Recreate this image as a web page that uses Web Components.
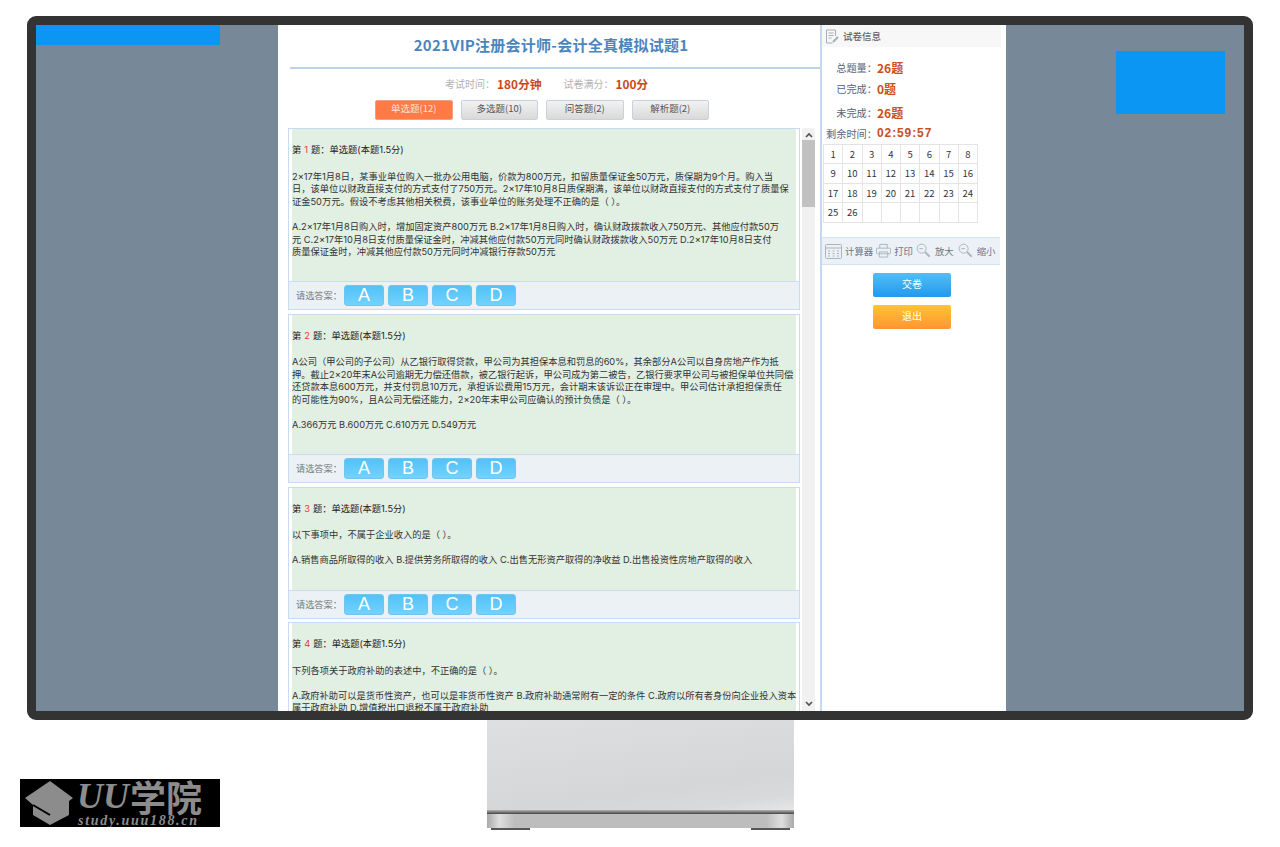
<!DOCTYPE html>
<html lang="zh-CN">
<head>
<meta charset="utf-8">
<title>2021VIP注册会计师-会计全真模拟试题1</title>
<style>
  html, body { margin: 0; height: 847px; background: #fff; overflow: hidden; }
  body { font-family: "Noto Sans CJK SC", "Liberation Sans", sans-serif; }
</style>
</head>
<body>
<desk-monitor>
  <exam-paper slot="paper">
    <exam-question num="1" style="--card-h:182px">
      <p>2×17年1月8日&#65292;某事业单位购入一批办公用电脑&#65292;价款为800万元&#65292;扣留质量保证金50万元&#65292;质保期为9个月。购入当<br>日&#65292;该单位以财政直接支付的方式支付了750万元。2×17年10月8日质保期满&#65292;该单位以财政直接支付的方式支付了质量保<br>证金50万元。假设不考虑其他相关税费&#65292;该事业单位的账务处理不正确的是&#65288; &#65289;。</p>
      <p>A.2×17年1月8日购入时&#65292;增加固定资产800万元 B.2×17年1月8日购入时&#65292;确认财政拨款收入750万元、其他应付款50万<br>元 C.2×17年10月8日支付质量保证金时&#65292;冲减其他应付款50万元同时确认财政拨款收入50万元 D.2×17年10月8日支付<br>质量保证金时&#65292;冲减其他应付款50万元同时冲减银行存款50万元</p>
    </exam-question>
    <exam-question num="2" style="--card-h:169.5px">
      <p>A公司&#65288;甲公司的子公司&#65289;从乙银行取得贷款&#65292;甲公司为其担保本息和罚息的60%&#65292;其余部分A公司以自身房地产作为抵<br>押。截止2×20年末A公司逾期无力偿还借款&#65292;被乙银行起诉&#65292;甲公司成为第二被告&#65292;乙银行要求甲公司与被担保单位共同偿<br>还贷款本息600万元&#65292;并支付罚息10万元&#65292;承担诉讼费用15万元&#65292;会计期末该诉讼正在审理中。甲公司估计承担担保责任<br>的可能性为90%&#65292;且A公司无偿还能力&#65292;2×20年末甲公司应确认的预计负债是&#65288; &#65289;。</p>
      <p>A.366万元 B.600万元 C.610万元 D.549万元</p>
    </exam-question>
    <exam-question num="3" style="--card-h:132px">
      <p>以下事项中&#65292;不属于企业收入的是&#65288; &#65289;。</p>
      <p>A.销售商品所取得的收入 B.提供劳务所取得的收入 C.出售无形资产取得的净收益 D.出售投资性房地产取得的收入</p>
    </exam-question>
    <exam-question num="4" style="--card-h:131px">
      <p>下列各项关于政府补助的表述中&#65292;不正确的是&#65288; &#65289;。</p>
      <p>A.政府补助可以是货币性资产&#65292;也可以是非货币性资产 B.政府补助通常附有一定的条件 C.政府以所有者身份向企业投入资本<br>属于政府补助 D.增值税出口退税不属于政府补助</p>
    </exam-question>
  </exam-paper>
  <exam-side slot="side"></exam-side>
</desk-monitor>
<desk-footer></desk-footer>

<script>
class DeskMonitor extends HTMLElement {
  constructor() {
    super();
    this.shadowDOM = this.attachShadow({mode: "open"});
    this.shadowDOM.innerHTML = `<style>
      :host {
        display: grid;
        grid-template-columns: 242px 728px 238px;
        width: 1208px;
        height: 686px;
        margin: 16px 0 0 27px;
        border: 9px solid #333;
        border-radius: 9px;
        background: #778899;
        overflow: hidden;
      }
      .bar { width: 184px; height: 20px; background: #0a96f2; }
      .ad { width: 109px; height: 63px; margin: 26px 0 0 110px; background: #0a96f2; }
      .page { display: flex; background: #fff; height: 686px; overflow: hidden; }
    </style>
    <div><div class="bar"></div></div>
    <div class="page"><slot name="paper"></slot><slot name="side"></slot></div>
    <div><div class="ad"></div></div>`;
  }
}

class ExamPaper extends HTMLElement {
  constructor() {
    super();
    this.shadowDOM = this.attachShadow({mode: "open"});
    this.shadowDOM.innerHTML = `<style>
      :host { display: block; width: 542px; flex: none; }
      * { box-sizing: border-box; }
      h1 {
        margin: 0 0 0 12px;
        height: 44px;
        border-bottom: 2px solid #bcd3ea;
        padding-right: 8px;
        font-size: 15px;
        line-height: 39px;
        font-weight: 700;
        letter-spacing: .25px;
        text-align: center;
        color: #4a86bd;
      }
      .meta {
        display: flex;
        align-items: center;
        height: 29px;
        padding-left: 167px;
        font-size: 10px;
        color: #b2b2b2;
      }
      .meta b { font-size: 11.8px; color: #c9481b; margin-left: 2px; }
      .meta b.time { margin-right: 22px; }
      .tabs { display: flex; gap: 8px; padding-left: 97px; height: 20px; margin-top: 2px; }
      .tab {
        width: 77.5px;
        border: 1px solid #c6d2df;
        border-radius: 2px;
        background: linear-gradient(#f2f2f2, #d9d9d9);
        font-size: 9.5px;
        line-height: 15px;
        text-align: center;
        color: #555;
      }
      .tab.on { border-color: #f0a080; background: #ff7a45; color: #ffe3d4; }
      .list { display: flex; height: 583px; margin: 8px 0 0 10px; }
      .cards { display: flex; flex-direction: column; gap: 3.5px; width: 512px; overflow: hidden; flex: none; }
      .scroll {
        width: 13px;
        margin-left: 2px;
        background: #f1f1f1;
        display: flex;
        flex-direction: column;
        align-items: center;
      }
      .scroll svg { flex: none; margin-top: 4px; }
      .thumb { width: 13px; height: 67px; margin-top: 2px; background: #c1c1c1; }
      .scroll .down { margin-top: auto; margin-bottom: 4px; }
    </style>
    <h1>2021VIP注册会计师-会计全真模拟试题1</h1>
    <div class="meta">考试时间&#65306;<b class="time">180分钟</b>试卷满分&#65306;<b>100分</b></div>
    <div class="tabs">
      <div class="tab on">单选题(12)</div>
      <div class="tab">多选题(10)</div>
      <div class="tab">问答题(2)</div>
      <div class="tab">解析题(2)</div>
    </div>
    <div class="list">
      <div class="cards"><slot></slot></div>
      <div class="scroll">
        <svg width="8" height="6" viewBox="0 0 8 6"><path d="M1 5l3-3 3 3" fill="none" stroke="#505050" stroke-width="1.6"/></svg>
        <div class="thumb"></div>
        <svg class="down" width="8" height="6" viewBox="0 0 8 6"><path d="M1 1l3 3 3-3" fill="none" stroke="#505050" stroke-width="1.6"/></svg>
      </div>
    </div>`;
  }
}

class ExamQuestion extends HTMLElement {
  constructor() {
    super();
    this.shadowDOM = this.attachShadow({mode: "open"});
    const num = this.getAttribute("num");
    this.shadowDOM.innerHTML = `<style>
      :host {
        display: flex;
        flex-direction: column;
        flex: none;
        box-sizing: border-box;
        height: var(--card-h);
        border: 1px solid #c8dcf1;
        background: #fff;
        font-family: "Inter", "Noto Sans CJK SC", sans-serif;
        font-size: 9.25px;
        line-height: 12.6px;
        color: #333;
      }
      ::slotted(p) { margin: 0 0 12.6px; white-space: nowrap; }
      .body { flex: 1; min-height: 0; margin: 0 3px; padding: 15px 0 0 0; background: #e2efe3; overflow: hidden; }
      .head { margin-bottom: 14px; color: #222; }
      .head em { font-style: normal; color: #e33; margin: 0 3px; }
      .pick {
        flex: none;
        display: flex;
        align-items: center;
        gap: 4px;
        height: 27px;
        border-top: 1px solid #c8dcf1;
        background: #ecf1f5;
        padding-left: 7px;
        font-family: "Noto Sans CJK SC", sans-serif;
        font-size: 9.2px;
        color: #777;
      }
      .pick span { width: 44px; white-space: nowrap; }
      .pick i {
        width: 40px;
        height: 21px;
        box-sizing: border-box;
        border: 1px solid #72c4ee;
        border-radius: 3px;
        background: linear-gradient(#52c2f6, #72d2fe);
        font: normal 18px/19px "Liberation Sans", sans-serif;
        color: #fff;
        text-align: center;
      }
    </style>
    <div class="body">
      <div class="head">第<em>${num}</em>题&#65306;单选题(本题1.5分)</div>
      <slot></slot>
    </div>
    <div class="pick"><span>请选答案&#65306;</span><i>A</i><i>B</i><i>C</i><i>D</i></div>`;
  }
}

class ExamSide extends HTMLElement {
  constructor() {
    super();
    this.shadowDOM = this.attachShadow({mode: "open"});
    let cells = "";
    for (let i = 1; i <= 32; i++) {
      cells += `<div>${i <= 26 ? i : ""}</div>`;
    }
    const lens = `<svg width="15" height="15" viewBox="0 0 16 16" fill="none" stroke="#a9b4bf"><circle cx="6" cy="6" r="4.8"/><path d="M3.500 6h4"/><path d="M9.600 9.600l5 5" stroke-width="2"/></svg>`;
    this.shadowDOM.innerHTML = `<style>
      :host {
        display: block;
        box-sizing: border-box;
        width: 186px;
        flex: none;
        border-left: 2px solid #c4d9ef;
      }
      .title {
        display: flex;
        align-items: center;
        gap: 3px;
        width: 179px;
        height: 22px;
        padding-left: 3px;
        box-sizing: border-box;
        background: #f7f7f7;
        font-size: 9.5px;
        font-weight: 500;
        color: #666;
      }
      .stats {
        display: grid;
        grid-template-columns: 55px auto;
        align-items: center;
        justify-content: start;
        margin: 10px 0 0 0;
        font-size: 10.2px;
        color: #56657a;
      }
      .stats span { text-align: right; white-space: nowrap; height: 21px; line-height: 21px; }
      .stats b { font-size: 12px; color: #c9501e; height: 21px; line-height: 21px; }
      .stats .wide { margin-top: 3px; }
      .stats .time { letter-spacing: .9px; font-family: "Liberation Sans", sans-serif; }
      .grid {
        display: grid;
        grid-template-columns: repeat(8, 19.25px);
        grid-auto-rows: 19.4px;
        width: 154px;
        margin: 0 0 0 1px;
        border-top: 1px solid #e4e4e4;
        border-left: 1px solid #e4e4e4;
        box-sizing: content-box;
      }
      .grid div {
        border-right: 1px solid #e4e4e4;
        border-bottom: 1px solid #e4e4e4;
        font-size: 9.5px;
        line-height: 18px;
        color: #334;
        text-align: center;
      }
      .tools {
        display: flex;
        align-items: center;
        width: 178px;
        height: 28px;
        margin: 14px 0 0 0;
        padding-left: 3px;
        box-sizing: border-box;
        border-top: 1px solid #d3e3f2;
        border-bottom: 1px solid #d3e3f2;
        background: #ebf1f6;
        font-size: 9.4px;
        color: #6b7785;
        white-space: nowrap;
      }
      .tools svg { flex: none; }
      .btns { display: flex; flex-direction: column; gap: 8px; margin: 8px 0 0 51px; }
      .btn {
        width: 78px;
        height: 24px;
        border-radius: 2px;
        font-size: 10px;
        line-height: 22px;
        text-align: center;
        color: #fff;
      }
      .blue { background: linear-gradient(#55bdf5, #2299ee); }
      .orange { background: linear-gradient(#ffc433, #ff9533); }
    </style>
    <div class="title">
      <svg width="15" height="15" viewBox="0 0 15 15" fill="none" stroke="#a5aeb8"><path d="M1.500 1h9v6M1.500 1v13h6"/><path d="M3.500 4h5M3.500 6.500h5M3.500 9h3"/><path d="M8 13l5-5" stroke-width="2"/></svg>
      试卷信息
    </div>
    <div class="stats">
      <span>总题量&#65306;</span><b>26题</b>
      <span>已完成&#65306;</span><b>0题</b>
      <span class="wide">未完成&#65306;</span><b class="wide">26题</b>
      <span>剩余时间&#65306;</span><b class="time">02:59:57</b>
    </div>
    <div class="grid">${cells}</div>
    <div class="tools">
      <svg width="17" height="16" viewBox="0 0 17 16" fill="none" stroke="#a9b4bf"><rect x=".5" y="1.500" width="16" height="14" rx="1"/><path d="M.5 5h16M3 8h2M7.500 8h2M12 8h2M3 10.500h2M7.500 10.500h2M12 10.500h2M3 13h2M7.500 13h2M12 13h2"/></svg>
      <span style="margin:0 3px">计算器</span>
      <svg width="15" height="15" viewBox="0 0 16 15" fill="none" stroke="#a9b4bf"><path d="M4 5V1h8v4"/><rect x=".5" y="5" width="15" height="6" rx="1"/><path d="M3.500 9v5.500h9V9z"/></svg>
      <span style="margin:0 3px">打印</span>
      ${lens}
      <span style="margin:0 4px">放大</span>
      ${lens}
      <span style="margin-left:4px">缩小</span>
    </div>
    <div class="btns"><div class="btn blue">交卷</div><div class="btn orange">退出</div></div>`;
  }
}

class DeskFooter extends HTMLElement {
  constructor() {
    super();
    this.shadowDOM = this.attachShadow({mode: "open"});
    this.shadowDOM.innerHTML = `<style>
      :host { display: flex; padding-left: 20px; height: 110px; }
      .logo {
        position: relative;
        flex: none;
        width: 200px;
        height: 48px;
        margin-top: 59px;
        background: #000;
        color: #8c8c8c;
        overflow: hidden;
      }
      .logo svg { position: absolute; left: 0; top: 0; }
      .brand {
        position: absolute;
        left: 57px;
        top: 0;
        height: 35px;
        display: flex;
        align-items: center;
        font: italic 700 36px/35px "Liberation Serif", serif;
        white-space: nowrap;
      }
      .brand span { font: 700 36px/35px "Noto Sans CJK SC", sans-serif; margin-left: 1px; }
      .url {
        position: absolute;
        left: 58px;
        top: 36px;
        font: italic 700 14px/12px "Liberation Serif", serif;
        letter-spacing: 1.7px;
        white-space: nowrap;
      }
      .stand { flex: none; width: 307px; margin-left: 267px; }
      .face { height: 90px; background: linear-gradient(172deg, #dedfe1, #d5d6d8 70%, #d8d9db 88%, #e6e6e6); }
      .edge { height: 4px; background: linear-gradient(#b5b5b5, #444); }
      .base {
        height: 14px;
        background: linear-gradient(90deg, #a9a9a9, #dedede 4%, #bdbdbd 9%, #bdbdbd 91%, #dedede 96%, #a9a9a9);
      }
      .feet { display: flex; justify-content: space-between; padding: 0 4px; }
      .feet i { width: 39px; height: 2px; background: #555; }
    </style>
    <div class="logo">
      <svg width="56" height="48" viewBox="0 0 56 48"><path d="M5 19L30 2 53 19 49 22V36L30 46 13 36V26z" fill="#8c8c8c"/><path d="M13 26L30 36" stroke="#000" stroke-width="2"/></svg>
      <div class="brand">UU<span>学院</span></div>
      <div class="url">study.uuu188.cn</div>
    </div>
    <div class="stand">
      <div class="face"></div>
      <div class="edge"></div>
      <div class="base"></div>
      <div class="feet"><i></i><i></i></div>
    </div>`;
  }
}

customElements.define("desk-monitor", DeskMonitor);
customElements.define("exam-paper", ExamPaper);
customElements.define("exam-question", ExamQuestion);
customElements.define("exam-side", ExamSide);
customElements.define("desk-footer", DeskFooter);
</script>
</body>
</html>
